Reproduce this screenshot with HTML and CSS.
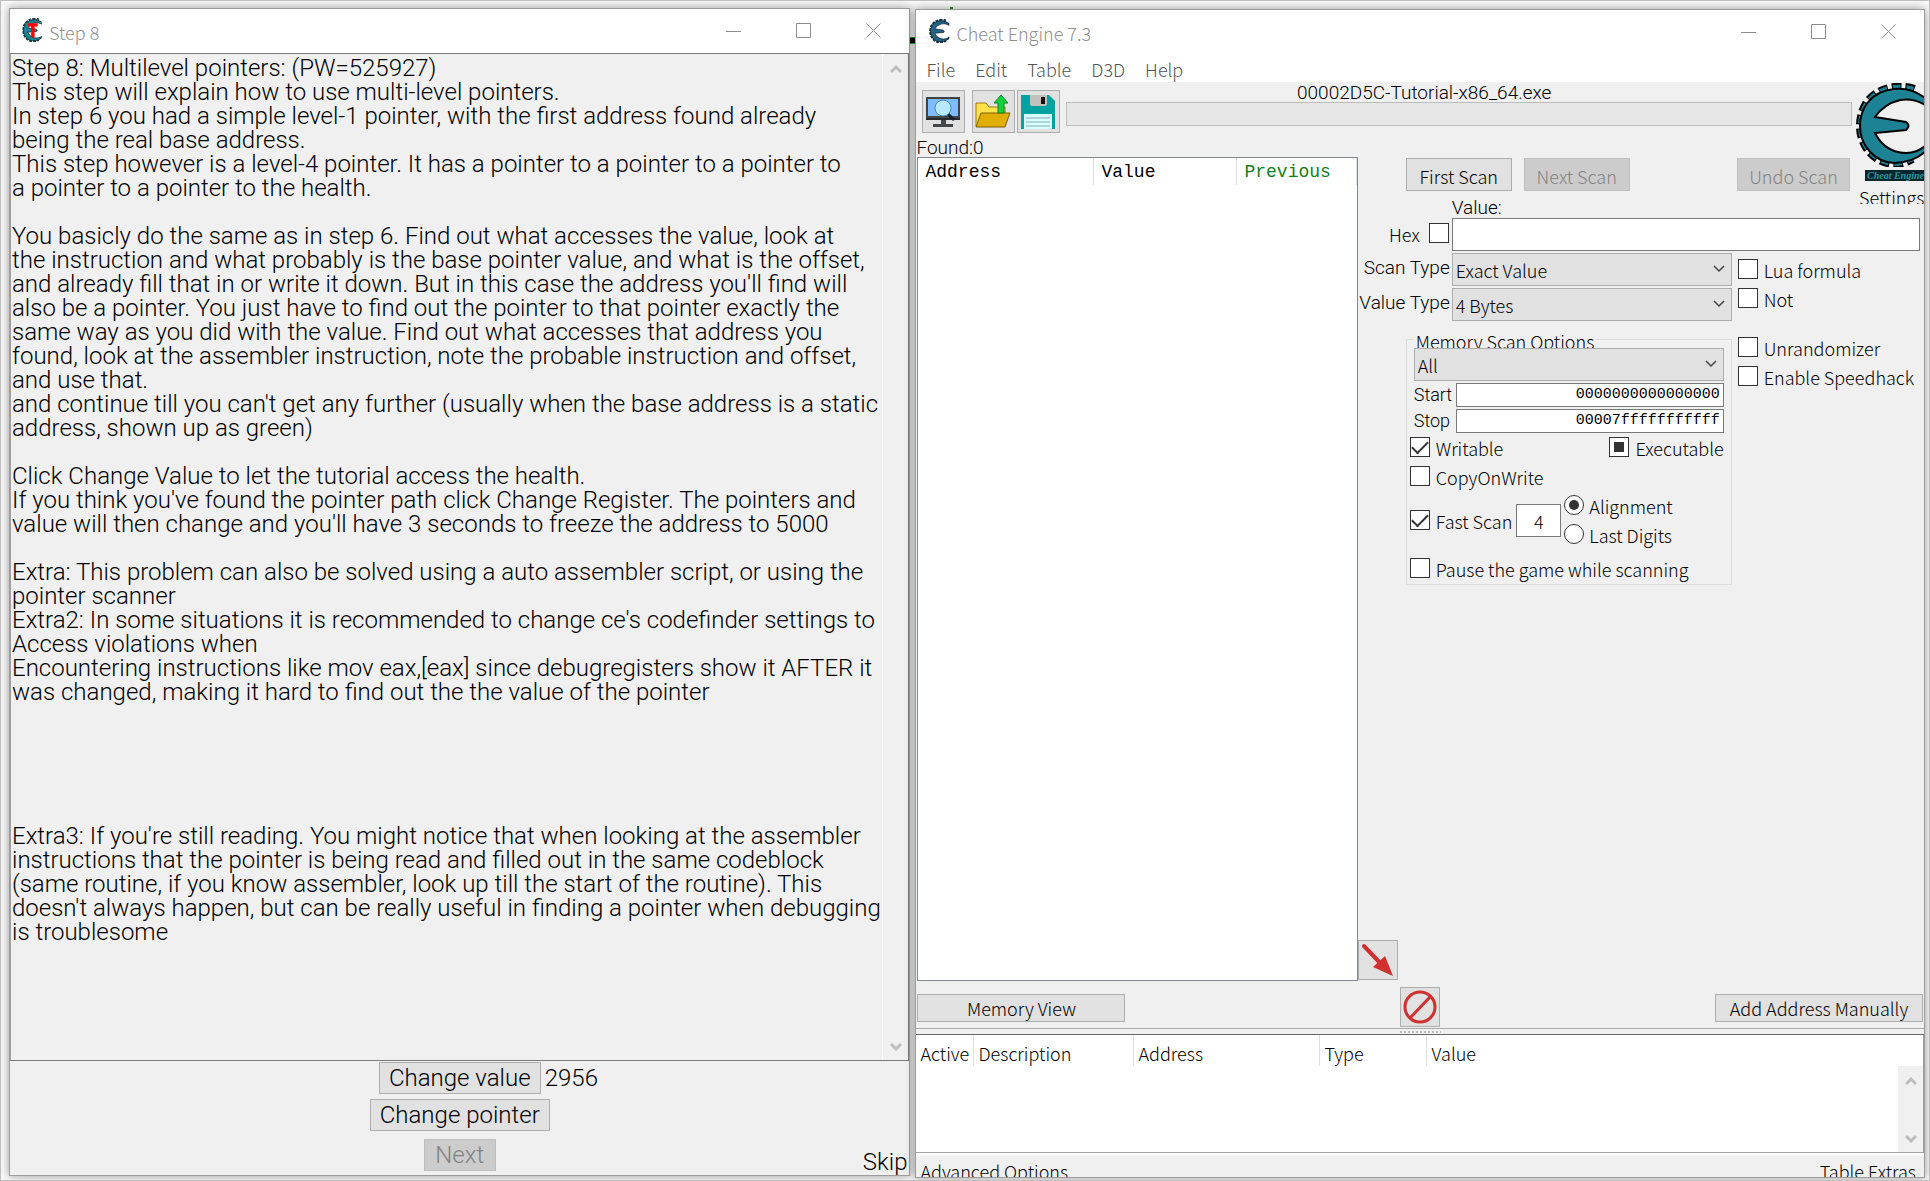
FILE: index.html
```html
<!DOCTYPE html>
<html lang="en">
<head>
<meta charset="utf-8">
<title>Cheat Engine 7.3</title>
<link rel="stylesheet" href="styles.css">
</head>
<body>
<svg class="defs" width="0" height="0" aria-hidden="true">
  <symbol id="gear-e" viewBox="0 0 68 84">
    <path class="rim" d="M58 7Q50 4 38 5C12 9 5 28 5 43C5 62 18 79 38 80Q48 80 56 75"/>
    <path class="teeth" d="M58 7Q50 4 38 5C12 9 5 28 5 43C5 62 18 79 38 80Q48 80 56 75"/>
    <path class="blade" d="M69 15Q55 4 38 6C12 9 4 28 4 43C4 62 18 79 38 80Q56 80 69 69V63C55 75 30 72 19 50L50 47Q55 43 50 39L19 34Q28 21 44 17Q58 15 69 22Z"/>
  </symbol>
  <symbol id="chev" viewBox="0 0 12 8"><path d="M1 1l5 5 5-5"/></symbol>
  <symbol id="arrow-up" viewBox="0 0 12 10"><path d="M1 8l5-5 5 5"/></symbol>
  <symbol id="arrow-down" viewBox="0 0 12 10"><path d="M1 2l5 5 5-5"/></symbol>
  <symbol id="win-min" viewBox="0 0 16 16"><path d="M0 8.500h15"/></symbol>
  <symbol id="win-max" viewBox="0 0 16 16"><path d="M.5.5h14v14H.5z"/></symbol>
  <symbol id="win-close" viewBox="0 0 16 16"><path d="M.5.5l14 14M14.500.5l-14 14"/></symbol>
</svg>

<section class="window tutorial">
  <header class="titlebar">
    <svg class="app-icon tutorial-icon" viewBox="0 0 68 84"><use href="#gear-e"/><path class="tee" d="M20 18H54V30H43V68H31V30H20Z"/></svg>
    <h1>Step 8</h1>
    <button class="win-btn" aria-label="Minimize"><svg><use href="#win-min"/></svg></button>
    <button class="win-btn" aria-label="Maximize"><svg><use href="#win-max"/></svg></button>
    <button class="win-btn" aria-label="Close"><svg><use href="#win-close"/></svg></button>
  </header>
  <div class="memo">
    <div class="memo-text">Step 8: Multilevel pointers: (PW=525927)
This step will explain how to use multi-level pointers.
In step 6 you had a simple level-1 pointer, with the first address found already
being the real base address.
This step however is a level-4 pointer. It has a pointer to a pointer to a pointer to
a pointer to a pointer to the health.

You basicly do the same as in step 6. Find out what accesses the value, look at
the instruction and what probably is the base pointer value, and what is the offset,
and already fill that in or write it down. But in this case the address you'll find will
also be a pointer. You just have to find out the pointer to that pointer exactly the
same way as you did with the value. Find out what accesses that address you
found, look at the assembler instruction, note the probable instruction and offset,
and use that.
and continue till you can't get any further (usually when the base address is a static
address, shown up as green)

Click Change Value to let the tutorial access the health.
If you think you've found the pointer path click Change Register. The pointers and
value will then change and you'll have 3 seconds to freeze the address to 5000

Extra: This problem can also be solved using a auto assembler script, or using the
pointer scanner
Extra2: In some situations it is recommended to change ce's codefinder settings to
Access violations when
Encountering instructions like mov eax,[eax] since debugregisters show it AFTER it
was changed, making it hard to find out the the value of the pointer





Extra3: If you're still reading. You might notice that when looking at the assembler
instructions that the pointer is being read and filled out in the same codeblock
(same routine, if you know assembler, look up till the start of the routine). This
doesn't always happen, but can be really useful in finding a pointer when debugging
is troublesome</div>
    <div class="scrollbar"><svg><use href="#arrow-up"/></svg><svg><use href="#arrow-down"/></svg></div>
  </div>
  <footer class="actions">
    <button class="btn change-value">Change value</button><output>2956</output>
    <button class="btn change-pointer">Change pointer</button>
    <button class="btn next" disabled>Next</button><a class="skip" href="#skip">Skip</a>
  </footer>
</section>

<section class="window engine">
  <header class="titlebar">
    <svg class="app-icon engine-icon"><use href="#gear-e"/></svg>
    <h1>Cheat Engine 7.3</h1>
    <button class="win-btn" aria-label="Minimize"><svg><use href="#win-min"/></svg></button>
    <button class="win-btn" aria-label="Maximize"><svg><use href="#win-max"/></svg></button>
    <button class="win-btn" aria-label="Close"><svg><use href="#win-close"/></svg></button>
  </header>
  <nav class="menu"><a href="#file">File</a><a href="#edit">Edit</a><a href="#table">Table</a><a href="#d3d">D3D</a><a href="#help">Help</a></nav>

  <main class="scanner">
    <div class="top">
      <div class="toolbar">
        <button class="tool open-process" aria-label="Open process"><svg viewBox="0 0 36 36">
          <path d="M1 3h34v23H1z" fill="#3f4347"/><path d="M3 5h30v17H3z" fill="#7fbcff"/><path d="M1 24h34v2H1z" fill="#282a2c"/>
          <path d="M16 26h5v4h-5zM8 30h20v3H8z" fill="#44484b"/><path d="M23 20l6 6" stroke="#14202c" stroke-width="3"/>
          <circle cx="18" cy="14" r="8" fill="#b5eaff" stroke="#4d86b8" stroke-width="1"/></svg></button>
        <button class="tool" aria-label="Load table"><svg viewBox="0 0 36 36">
          <path d="M1 32V9h10l3 4h16v8" fill="#ffe14c" stroke="#9c7b12"/><path d="M1 33l5-14h29l-5 14z" fill="#e0ae05" stroke="#7d6009"/>
          <path d="M26 1l7 8h-4v10h-6V9h-4z" fill="#13d13a" stroke="#0c8627"/></svg></button>
        <button class="tool" aria-label="Save table"><svg viewBox="0 0 36 36">
          <path d="M1 1h28l6 6v28H1z" fill="#00a3a0"/><path d="M10 1h17v9q0 2-2 2H12q-2 0-2-2z" fill="#c2c2bd"/><path d="M21 3h4v7h-4z" fill="#111"/>
          <path d="M4 20h28v15H4z" fill="#d8ffff"/><path d="M6 24h24M6 28h24M6 32h24" stroke="#8aa9ad"/></svg></button>
        <div class="process"><span>00002D5C-Tutorial-x86_64.exe</span><div class="progress"></div></div>
      </div>
      <div class="found">Found:0</div>
    </div>

    <div class="brand">
      <svg class="logo" viewBox="0 0 68 100">
        <defs><radialGradient id="teal" gradientUnits="userSpaceOnUse" cx="40" cy="44" r="42"><stop offset="0" stop-color="#4fc3d3"/><stop offset=".6" stop-color="#238ea0"/><stop offset="1" stop-color="#17798b"/></radialGradient></defs>
        <use href="#gear-e" width="68" height="84"/>
        <path class="plate" d="M9 87h59v11H9z"/>
        <text x="11" y="96">Cheat Engine</text>
      </svg>
      <a href="#settings">Settings</a>
    </div>

    <table class="results">
      <thead><tr><th>Address</th><th>Value</th><th class="previous">Previous</th></tr></thead>
      <tbody></tbody>
    </table>

    <div class="scan-buttons">
      <button class="btn">First Scan</button><button class="btn" disabled>Next Scan</button><button class="btn undo" disabled>Undo Scan</button>
    </div>

    <form class="form">
      <label class="value-label" for="value">Value:</label>
      <label class="check hex">Hex<input type="checkbox"></label>
      <input class="field value" id="value" type="text">
      <label class="side" for="scan-type">Scan Type</label>
      <div class="select"><select id="scan-type"><option>Exact Value</option></select><svg><use href="#chev"/></svg></div>
      <label class="side" for="value-type">Value Type</label>
      <div class="select"><select id="value-type"><option>4 Bytes</option></select><svg><use href="#chev"/></svg></div>

      <div class="extras">
        <label class="check"><input type="checkbox">Lua formula</label>
        <label class="check"><input type="checkbox">Not</label>
        <label class="check apart"><input type="checkbox">Unrandomizer</label>
        <label class="check"><input type="checkbox">Enable Speedhack</label>
      </div>

      <fieldset>
        <legend>Memory Scan Options</legend>
        <div class="select"><select aria-label="Region"><option>All</option></select><svg><use href="#chev"/></svg></div>
        <div class="range"><label for="start">Start</label><input class="field" id="start" type="text" value="0000000000000000"></div>
        <div class="range"><label for="stop">Stop</label><input class="field" id="stop" type="text" value="00007fffffffffff"></div>
        <div class="flags">
          <label class="check"><input type="checkbox" checked>Writable</label>
          <label class="check"><input class="mixed" type="checkbox">Executable</label>
        </div>
        <label class="check"><input type="checkbox">CopyOnWrite</label>
        <div class="fast">
          <label class="check"><input type="checkbox" checked>Fast Scan</label>
          <input class="field" type="text" value="4" aria-label="Alignment value">
          <div class="radios">
            <label class="check"><input type="radio" name="align" checked>Alignment</label>
            <label class="check"><input type="radio" name="align">Last Digits</label>
          </div>
        </div>
        <label class="check"><input type="checkbox">Pause the game while scanning</label>
      </fieldset>
    </form>

    <button class="tool copy" aria-label="Copy selected to address list"><svg viewBox="0 0 36 36"><path d="M4 4L22 23" stroke="#cf3030" stroke-width="4" stroke-linecap="round"/><path d="M33 34L13 25L25 14Z" fill="#cf3030"/></svg></button>
  </main>

  <div class="bar">
    <button class="btn">Memory View</button>
    <button class="tool" aria-label="Clear list"><svg viewBox="0 0 36 36"><circle cx="18" cy="18" r="15" fill="none" stroke="#cf3030" stroke-width="3"/><path d="M8 29L28 8" stroke="#cf3030" stroke-width="3"/></svg></button>
    <button class="btn">Add Address Manually</button>
  </div>
  <div class="splitter"><i></i></div>
  <div class="cheats">
    <table>
      <thead><tr><th>Active</th><th>Description</th><th>Address</th><th>Type</th><th>Value</th></tr></thead>
      <tbody></tbody>
    </table>
    <div class="scrollbar"><svg><use href="#arrow-up"/></svg><svg><use href="#arrow-down"/></svg></div>
  </div>
  <footer class="status"><a href="#advanced">Advanced Options</a><a href="#extras">Table Extras</a></footer>
</section>
</body>
</html>
```
FILE: styles.css
```css
* { box-sizing: border-box; }

:root {
  --face: #f0f0f0;
  --button: #e1e1e1;
  --line: #adadad;
  --bitmap: Roboto, "Liberation Sans", sans-serif;
  --ui: "Noto Sans CJK KR", "Noto Sans", sans-serif;
}

body {
  display: grid;
  grid-template-columns: 901fr 1009fr;
  gap: 5px;
  min-height: 100vh;
  margin: 0;
  padding: 7px 4px 2px 8px;
  border: 1px solid #bfbfbf;
  background: #fafafa;
  color: #000;
  font: 300 18px/26px var(--ui);
}

.defs { position: absolute; }
a { color: inherit; text-decoration: none; }
button, input, select { margin: 0; border-radius: 0; color: inherit; font: inherit; }

/* Windows */
.window {
  display: flex;
  flex-direction: column;
  position: relative;
  min-width: 0;
  border: 1px solid #9c9c9c;
  background: var(--face);
  box-shadow: 0 0 9px rgba(0, 0, 0, .4);
}
.tutorial { margin-bottom: 2px; font: 300 24px/24px var(--bitmap); }
.engine { margin-top: 1px; }

/* Bits of the desktop that show between the windows */
.engine::before, .engine::after { position: absolute; content: ""; }
.engine::before { top: 27px; left: -6px; width: 5px; height: 5px; border: solid #117a11; border-width: 1px 0; background: #000; }
.engine::after { top: -3px; left: 34px; width: 3px; height: 2px; background: #117a11; }

.titlebar {
  display: flex;
  height: 44px;
  padding-left: 10px;
  background: #fff;
  color: #8f8f8f;
}
.titlebar h1 {
  flex: 1;
  margin: 0 0 0 5px;
  font: 300 18px/46px var(--ui);
}
.engine .titlebar { height: 48px; padding-left: 12px; }
.engine .titlebar h1 { margin-left: 6px; }
.app-icon { width: 24px; height: 24px; margin-top: 9px; }
.engine .app-icon { width: 22px; }
.win-btn {
  width: 70px;
  height: 44px;
  padding: 0;
  border: 0;
  background: none;
}
.win-btn svg {
  display: block;
  width: 16px;
  height: 16px;
  margin: 0 auto;
  fill: none;
  stroke: #8c8c8c;
}

.rim { fill: none; stroke: #000; stroke-width: 10; stroke-dasharray: 9 4; }
.teeth { fill: none; stroke: #1c7f91; stroke-width: 6; stroke-dasharray: 7 6; stroke-dashoffset: -1; }
.blade { fill: #1c8294; stroke: #000; stroke-width: 2; }
.logo .blade { fill: url(#teal); }
.tee { fill: #f00; }
.engine-icon { filter: hue-rotate(15deg) brightness(.8); }

/* Tutorial text */
.memo {
  display: flex;
  flex: 1;
  border: 1px solid #7a7a7a;
  border-left-color: #a0a0a0;
}
.memo-text { flex: 1; min-width: 0; padding: 2px 0 2px 1px; white-space: pre; }
.scrollbar {
  display: flex;
  flex: none;
  flex-direction: column;
  justify-content: space-between;
  align-items: center;
  width: 26px;
  padding: 10px 0 8px;
  border-left: 1px solid #fff;
  background: var(--face);
}
.scrollbar svg { width: 12px; height: 10px; fill: none; stroke: #bdbdbd; stroke-width: 3; }

.btn {
  padding: 0;
  border: 1px solid var(--line);
  background: var(--button);
  white-space: nowrap;
}
.btn:disabled { border-color: #bfbfbf; background: #ccc; color: #838383; }

.actions {
  display: grid;
  grid-template-columns: 1fr 180px 1fr;
  grid-template-rows: 32px 32px 35px;
  row-gap: 5px;
  align-items: center;
  padding: 1px 2px 4px;
}
.actions .btn { grid-column: 2; justify-self: center; height: 32px; }
.actions .change-value { width: 162px; }
.actions .change-pointer { width: 180px; }
.actions .next { align-self: end; width: 72px; }
.actions output { margin-left: -5px; }
.actions .skip { justify-self: end; align-self: end; margin-bottom: -3px; }

/* Menu and toolbar */
.menu {
  display: flex;
  gap: 20px;
  height: 24px;
  padding-left: 10px;
  background: #fff;
  color: #555;
  line-height: 22px;
}
.scanner {
  display: grid;
  flex: 1;
  grid-template-columns: 441fr 495fr 71px;
  grid-template-rows: 75px 40px 1fr;
}
.top { display: flex; flex-direction: column; grid-column: 1 / 3; }
.toolbar { display: flex; flex: 1; padding: 0 1px 0 6px; }
.tool {
  width: 40px;
  height: 40px;
  padding: 1px;
  border: 1px solid var(--line);
  background: var(--button);
}
.tool svg { display: block; width: 36px; height: 36px; }
.toolbar .tool { width: 43px; height: 43px; margin: 8px 2px 0 0; padding: 2px; }
.toolbar .open-process { margin-right: 7px; }
.process {
  flex: 1;
  margin-left: 4px;
  font: 300 19px/22px var(--bitmap);
  text-align: center;
}
.process span { display: block; height: 20px; padding-right: 70px; }
.progress { height: 24px; border: 1px solid #bcbcbc; background: #e6e6e6; }
.found { height: 20px; font: 300 19px/22px var(--bitmap); }

.brand {
  grid-area: 1 / 3 / 3 / 4;
  height: 122px;
  padding: 1px 0 0 3px;
  overflow: hidden;
}
.brand a { display: block; margin-left: 3px; line-height: 28px; }
.logo { display: block; width: 68px; height: 100px; }
.plate { fill: #06262b; }
.logo text { fill: #2795a5; font: italic bold 10px "Liberation Serif", serif; }

/* Results list */
.results {
  grid-area: 2 / 1 / 4 / 2;
  width: calc(100% - 1px);
  height: 100%;
  margin-left: 1px;
  border: 1px solid #828790;
  border-spacing: 0;
  background: #fff;
  font: 400 18px/26px "Liberation Mono", monospace;
  table-layout: fixed;
}
th {
  padding: 0;
  border-right: 1px solid #e0e0e0;
  font-weight: inherit;
  text-align: left;
  vertical-align: top;
}
.results th { height: 26px; padding: 1px 0 0 7px; }
.results thead { height: 26px; }
.results th:nth-child(1) { width: 176px; }
.results th:nth-child(2) { width: 143px; }
.results .previous { color: #11801b; }

/* Scan form */
.scan-buttons {
  display: flex;
  gap: 12px;
  align-items: flex-start;
  grid-area: 2 / 2 / 3 / 3;
  padding: 1px 3px 0 48px;
}
.scan-buttons .btn { width: 106px; height: 33px; padding-top: 2px; }
.scan-buttons .undo { width: 113px; margin-left: auto; }

.form {
  display: grid;
  grid-area: 3 / 2 / 4 / 4;
  grid-template-columns: 92px 281fr 187fr;
  grid-template-rows: 19px 33px 33px 33px auto;
  gap: 2px 2px;
  align-content: start;
  padding-right: 4px;
}
.value-label, .side { font: 300 19px/22px var(--bitmap); }
.value-label { grid-column: 2; }
.side { grid-column: 1; height: 28px; text-align: right; white-space: nowrap; line-height: 30px; }
.form > .select { grid-column: 2; }
.value { grid-column: 2 / 4; }
.form > .hex { grid-column: 1; justify-content: flex-end; gap: 9px; margin: 5px 1px 0 0; }

.field { width: 100%; min-width: 0; padding: 0 3px; border: 1px solid #7a7a7a; background: #fff; }
.select { position: relative; height: 33px; }
.select select {
  width: 100%;
  height: 33px;
  padding: 1px 4px 0 3px;
  border: 1px solid var(--line);
  appearance: none;
  background: var(--button);
}
.select svg {
  position: absolute;
  top: 12px;
  right: 7px;
  width: 12px;
  height: 8px;
  fill: none;
  stroke: #444;
  stroke-width: 1.500;
  pointer-events: none;
}

.check { display: flex; gap: 6px; height: 26px; line-height: 22px; white-space: nowrap; }
.check input {
  display: grid;
  flex: none;
  place-items: center;
  width: 20px;
  height: 20px;
  border: 1px solid #333;
  appearance: none;
  background: #fff;
}
.check input[type="radio"] { border-radius: 50%; }
.check input[type="radio"]:checked::before { width: 10px; height: 10px; border-radius: 50%; background: #333; content: ""; }
.check input[type="checkbox"]:checked::before {
  width: 14px;
  height: 7px;
  margin-bottom: 4px;
  border: solid #333;
  border-width: 0 0 2px 2px;
  rotate: -45deg;
  content: "";
}
.check .mixed::before { width: 10px; height: 10px; background: #333; content: ""; }

.extras {
  display: flex;
  flex-direction: column;
  gap: 3px;
  grid-area: 3 / 3 / 6 / 4;
  padding: 6px 0 0 4px;
}
.extras .apart { margin-top: 20px; }

fieldset {
  display: flex;
  flex-direction: column;
  grid-column: 1 / 3;
  grid-row: 5;
  min-width: 0;
  margin: 8px 0 0 48px;
  padding: 0 7px;
  border: 1px solid #dcdcdc;
}
legend { height: 17px; padding: 0 2px; overflow: hidden; line-height: 20px; }
.range { display: flex; height: 24px; margin-top: 2px; font: 300 18px/24px var(--bitmap); }
.range label { width: 42px; flex: none; }
.range .field { font: 400 15px/22px "Liberation Mono", monospace; text-align: right; }
fieldset .check { margin: 0 0 3px -4px; }
.flags { display: flex; justify-content: space-between; margin-top: 4px; }
.fast { display: flex; height: 60px; }
.fast > .check { margin-top: 15px; }
.fast > .field { width: 45px; height: 33px; margin: 9px 3px 0 4px; text-align: center; }
.radios .check { margin: 0 0 3px; gap: 5px; }
.fast + .check { margin-top: 3px; margin-bottom: 0; }

.copy { grid-area: 3 / 2 / 4 / 3; align-self: end; margin: 0 0 1px; }

/* Lower half */
.bar { display: flex; justify-content: space-between; align-items: center; height: 47px; padding: 5px 1px 0; }
.bar .btn { width: 208px; height: 28px; margin-top: 2px; line-height: 26px; }
.splitter { height: 7px; border-top: 1px solid #aaa; border-bottom: 1px solid #666; }
.splitter i { display: block; width: 41px; height: 2px; margin: 2px auto 0; background: repeating-linear-gradient(90deg, #bbb 0 2px, transparent 2px 4px); }

.cheats { display: flex; position: relative; height: 118px; border-right: 1px solid #a0a0a0; border-bottom: 1px solid #a0a0a0; background: #fff; }
.cheats table { width: 100%; height: 31px; border-spacing: 0; table-layout: fixed; }
.cheats th { height: 31px; padding: 5px 0 0 4px; white-space: nowrap; }
.cheats th:nth-child(1) { width: 58px; }
.cheats th:nth-child(2) { width: 160px; }
.cheats th:nth-child(3) { width: 186px; }
.cheats th:nth-child(4) { width: 107px; }
.cheats th:last-child { border: 0; }
.cheats .scrollbar { position: absolute; right: 0; bottom: 0; top: 31px; }
.status {
  display: flex;
  justify-content: space-between;
  height: 24px;
  padding: 3px 8px 0 4px;
  overflow: hidden;
  border-top: 2px solid #fff;
}
```
